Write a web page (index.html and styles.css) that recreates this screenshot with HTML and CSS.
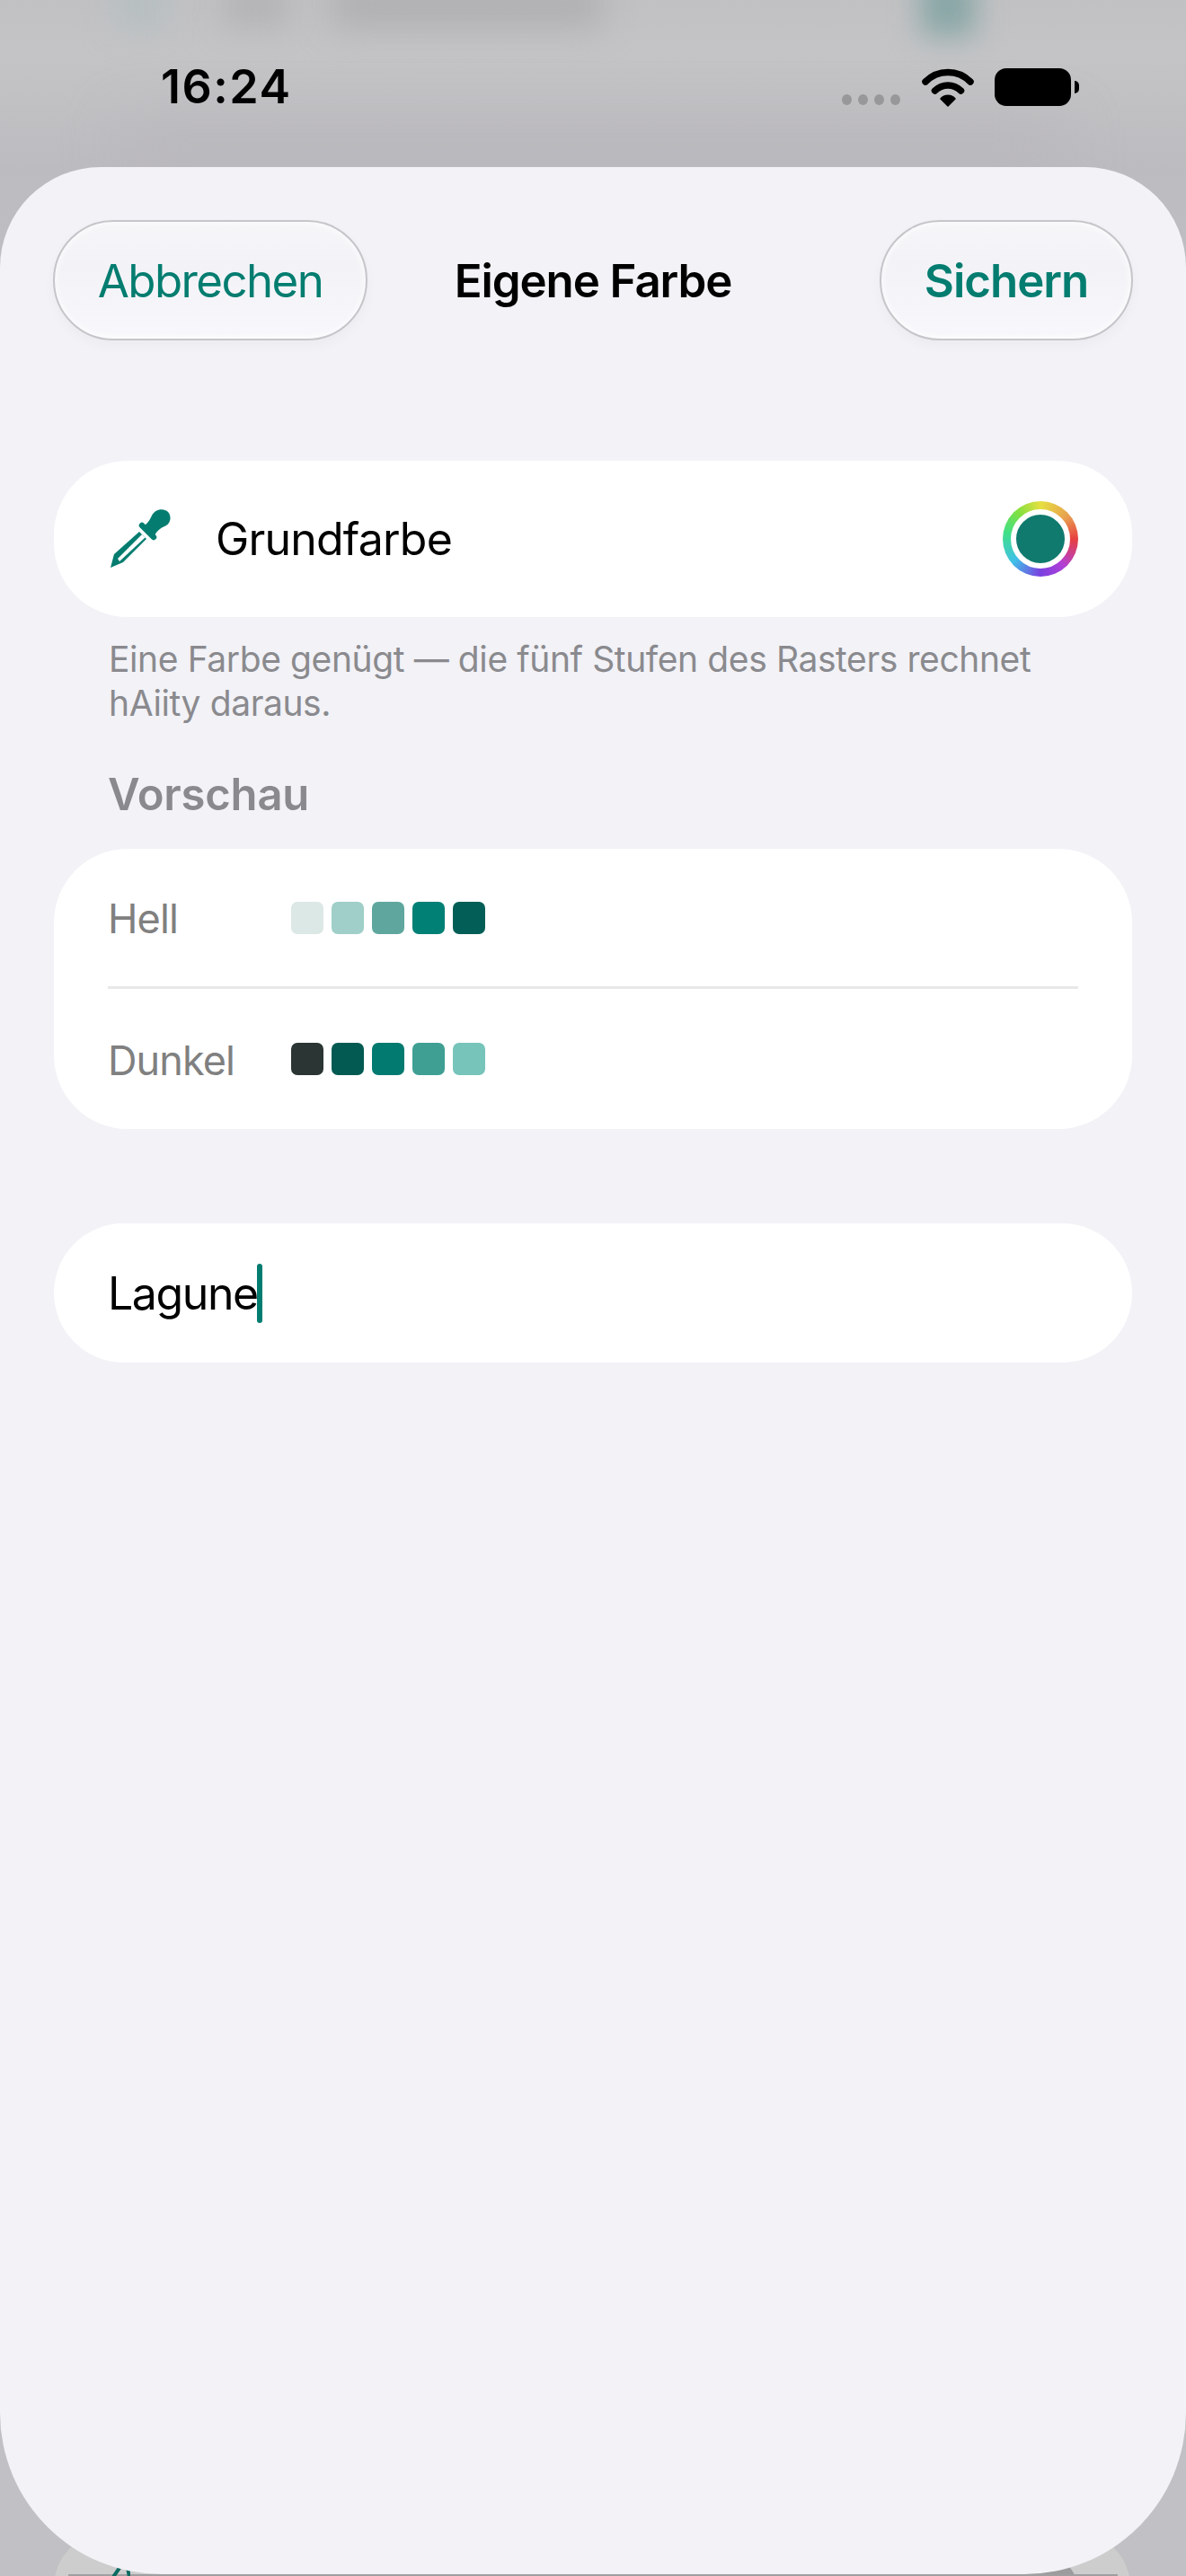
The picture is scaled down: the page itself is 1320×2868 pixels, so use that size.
FILE: index.html
```html
<!DOCTYPE html>
<html lang="de">
<head>
    <meta charset="UTF-8">
    <title>Eigene Farbe</title>
    <link rel="stylesheet" href="styles.css">
</head>
<body>
    <div class="screen">
        <!-- blurred page behind the sheet -->
        <div class="backdrop">
            <div class="blur-text"></div>
            <div class="blur-text-long"></div>
            <div class="blur-teal"></div>
            <div class="blur-teal-small"></div>
            <div class="blur-band"></div>
            <div class="tab-left"></div>
            <div class="tab-right"></div>
            <div class="tab-right-dark"></div>
            <div class="tab-strip"></div>
            <svg class="tab-glyph" viewBox="0 0 20 12" width="20" height="12">
                <path d="M8 1 L1 11 M17 1 L19 11" fill="none" stroke="#0b6b61" stroke-width="4"/>
            </svg>
        </div>

        <div class="status-bar">
            <span class="time">16:24</span>
            <div class="status-icons">
                <div class="dots"><i></i><i></i><i></i><i></i></div>
                <svg class="wifi" viewBox="0 0 58 44" width="58" height="44">
                    <path d="M4 16 C18 2 40 2 54 16" fill="none" stroke="#000" stroke-width="7.5" stroke-linecap="round"/>
                    <path d="M14.500 26 C23 18 35 18 43.500 26" fill="none" stroke="#000" stroke-width="7.500" stroke-linecap="round"/>
                    <path d="M29 43 L21 35 C25 30 33 30 37 35 Z" fill="#000" stroke="#000" stroke-width="1.500" stroke-linejoin="round"/>
                </svg>
                <div class="battery"></div>
            </div>
        </div>

        <div class="sheet">
            <div class="nav">
                <button class="glass-btn cancel">Abbrechen</button>
                <span class="nav-title">Eigene Farbe</span>
                <button class="glass-btn save">Sichern</button>
            </div>

            <div class="card base-row">
                <svg class="dropper" viewBox="0 0 68 68" width="68" height="68">
                    <path d="M33 26 L41 34 L15 60 L1 66 L5 51 Z" fill="#047d70"/>
                    <path d="M36 29 L39.500 32.500 L11 59 L9 56 Z" fill="#fff"/>
                    <path d="M36 19 L49 32" stroke="#047d70" stroke-width="6.500" stroke-linecap="round"/>
                    <path d="M39 19 C43 16 45 12 47 8 C50 1 60 -1 65 4 C70 10 67 18 61 20 C56 22 53 25 50 30 Z" fill="#047d70"/>
                </svg>
                <span class="base-label">Grundfarbe</span>
                <div class="well"><div class="well-inner"></div></div>
            </div>
            <p class="hint">Eine Farbe genügt — die fünf Stufen des Rasters rechnet hAiity daraus.</p>

            <h2 class="section-title">Vorschau</h2>
            <div class="card preview">
                <div class="preview-row">
                    <span class="preview-label">Hell</span>
                    <div class="swatches">
                        <i class="s1"></i><i class="s2"></i><i class="s3"></i><i class="s4"></i><i class="s5"></i>
                    </div>
                </div>
                <div class="divider"></div>
                <div class="preview-row">
                    <span class="preview-label">Dunkel</span>
                    <div class="swatches">
                        <i class="d1"></i><i class="d2"></i><i class="d3"></i><i class="d4"></i><i class="d5"></i>
                    </div>
                </div>
            </div>

            <div class="card name-field">
                <span class="name-text">Lagune</span><span class="caret"></span>
            </div>
        </div>
    </div>
</body>
</html>
```

FILE: styles.css
```css
* {
    box-sizing: border-box;
}
html, body {
    margin: 0;
    padding: 0;
}
body {
    font-family: Inter, "Liberation Sans", sans-serif;
    background-color: #c1c0c4;
}
.screen {
    position: relative;
    width: 1320px;
    height: 2868px;
    overflow: hidden;
}

/* backdrop */
.backdrop {
    position: absolute;
    inset: 0;
    overflow: hidden;
    background: linear-gradient(180deg, #c1c1c3 0, #c4c4c6 60px, #bcbbbf 186px, #c1c0c4 400px);
}
.blur-text {
    position: absolute;
    left: 250px;
    top: -20px;
    width: 70px;
    height: 50px;
    background-color: #b4b4b6;
    filter: blur(16px);
}
.blur-text-long {
    position: absolute;
    left: 370px;
    top: -20px;
    width: 300px;
    height: 50px;
    background-color: #b0b0b3;
    filter: blur(18px);
}
.blur-teal {
    position: absolute;
    left: 1025px;
    top: -30px;
    width: 60px;
    height: 70px;
    background-color: #88a6a6;
    filter: blur(16px);
}
.blur-teal-small {
    position: absolute;
    left: 130px;
    top: -20px;
    width: 55px;
    height: 50px;
    background-color: #b5bfc0;
    filter: blur(18px);
}
.blur-band {
    position: absolute;
    left: 140px;
    top: 140px;
    width: 1040px;
    height: 60px;
    background-color: #b9b8bc;
    filter: blur(30px);
}
.tab-left {
    position: absolute;
    left: 60px;
    top: 2820px;
    width: 300px;
    height: 120px;
    border-radius: 60px;
    background-color: #cdcdcd;
}
.tab-right {
    position: absolute;
    left: 1020px;
    top: 2820px;
    width: 238px;
    height: 120px;
    border-radius: 60px;
    background-color: #cdcdcd;
}
.tab-right-dark {
    position: absolute;
    left: 1110px;
    top: 2840px;
    width: 92px;
    height: 100px;
    border-radius: 0 50px 0 0;
    background-color: #9c9c9c;
}
.tab-strip {
    position: absolute;
    left: 76px;
    top: 2866px;
    width: 1168px;
    height: 2px;
    background-color: #9f9fa1;
}
.tab-glyph {
    position: absolute;
    left: 125px;
    top: 2858px;
}

/* status bar */
.status-bar {
    position: absolute;
    left: 0;
    top: 0;
    width: 100%;
    height: 186px;
}
.time {
    position: absolute;
    left: 179px;
    top: 67px;
    font-size: 52px;
    line-height: 60px;
    font-weight: 600;
    letter-spacing: 1.5px;
    color: #000;
}
.status-icons {
    position: absolute;
    left: 937px;
    top: 75px;
    display: flex;
    align-items: flex-start;
}
.dots {
    display: flex;
    gap: 7px;
    margin-top: 30px;
    margin-right: 24px;
}
.dots i {
    display: block;
    width: 11px;
    height: 12px;
    border-radius: 50%;
    background-color: #98989b;
}
.wifi {
    display: block;
    margin-right: 23px;
}
.battery {
    position: relative;
    width: 85px;
    height: 42px;
    margin-top: 1px;
    border-radius: 13px;
    background-color: #000;
}
.battery::after {
    content: "";
    position: absolute;
    right: -9px;
    top: 14px;
    width: 5px;
    height: 14px;
    border-radius: 0 5px 5px 0;
    background-color: #000;
}

/* sheet */
.sheet {
    position: absolute;
    left: 0;
    top: 186px;
    width: 1320px;
    height: 2680px;
    padding: 59px 60px 0;
    border-radius: 112px 112px 180px 180px;
    background-color: #f2f2f7;
}
.nav {
    display: grid;
    grid-template-columns: 1fr auto 1fr;
    align-items: center;
    height: 134px;
    margin: 0 -1px 134px;
}
.glass-btn {
    height: 134px;
    padding: 0;
    border: 2px solid #c6c6ca;
    border-radius: 67px;
    background: linear-gradient(180deg, #f6f6f9 0, #f3f3f7 40%, #f8f8fc 100%);
    box-shadow: inset 0 0 8px #fff, 0 6px 14px rgba(0,0,0,0.03);
    font-family: inherit;
    font-size: 51px;
    font-weight: 400;
    color: #047d70;
}
.glass-btn.cancel {
    width: 350px;
    justify-self: start;
    letter-spacing: -1.6px;
}
.glass-btn.save {
    width: 282px;
    justify-self: end;
    font-weight: 600;
    letter-spacing: -1px;
}
.nav-title {
    font-size: 51px;
    font-weight: 600;
    letter-spacing: -1.1px;
    color: #000;
}
.card {
    background-color: #fff;
    border-radius: 82px;
}
.base-row {
    display: flex;
    align-items: center;
    height: 174px;
    padding: 0 60px 0 62px;
}
.dropper {
    display: block;
    margin-right: 50px;
}
.base-label {
    flex: 1;
    font-size: 50px;
    letter-spacing: -0.8px;
    color: #000;
}
.well {
    display: flex;
    align-items: center;
    justify-content: center;
    width: 84px;
    height: 84px;
    border-radius: 50%;
    background: conic-gradient(#e6e040 0deg, #e8a050 50deg, #e84040 90deg, #b040d8 140deg, #7a40e0 180deg, #40c0e8 230deg, #40e088 280deg, #80e040 320deg, #e6e040 360deg);
}
.well-inner {
    width: 66px;
    height: 66px;
    border: 6px solid #fff;
    border-radius: 50%;
    background-color: #107a6e;
}
.hint {
    width: 1100px;
    margin: 22px 0 0 61px;
    font-size: 39px;
    line-height: 49px;
    letter-spacing: -0.4px;
    color: #8a8a8e;
}
.section-title {
    margin: 48px 0 0 60px;
    font-size: 49px;
    line-height: 60px;
    font-weight: 600;
    letter-spacing: -0.2px;
    color: #8a8a8e;
}
.preview {
    height: 312px;
    margin-top: 30px;
    padding: 0 60px;
}
.preview-row {
    display: flex;
    align-items: center;
    height: 153px;
}
.preview-row:last-child {
    height: 156px;
}
.preview-label {
    width: 204px;
    padding-top: 2px;
    font-size: 45px;
    letter-spacing: -0.9px;
    color: #808080;
}
.swatches {
    display: flex;
    gap: 9px;
}
.swatches i {
    display: block;
    width: 36px;
    height: 36px;
    border-radius: 7px;
}
.s1 { background-color: #dce8e5; }
.s2 { background-color: #9fcfc8; }
.s3 { background-color: #5fa79e; }
.s4 { background-color: #018076; }
.s5 { background-color: #025e56; }
.d1 { background-color: #2a3534; }
.d2 { background-color: #025a52; }
.d3 { background-color: #027a70; }
.d4 { background-color: #3f9f93; }
.d5 { background-color: #76c4ba; }
.divider {
    height: 3px;
    background-color: #e8e8e8;
}
.name-field {
    display: flex;
    align-items: center;
    height: 155px;
    margin-top: 105px;
    padding-left: 60px;
    border-radius: 78px;
}
.name-text {
    font-size: 50px;
    letter-spacing: -1.4px;
    color: #000;
}
.caret {
    width: 6px;
    height: 66px;
    margin-left: -1px;
    border-radius: 3px;
    background-color: #047d70;
}
```
